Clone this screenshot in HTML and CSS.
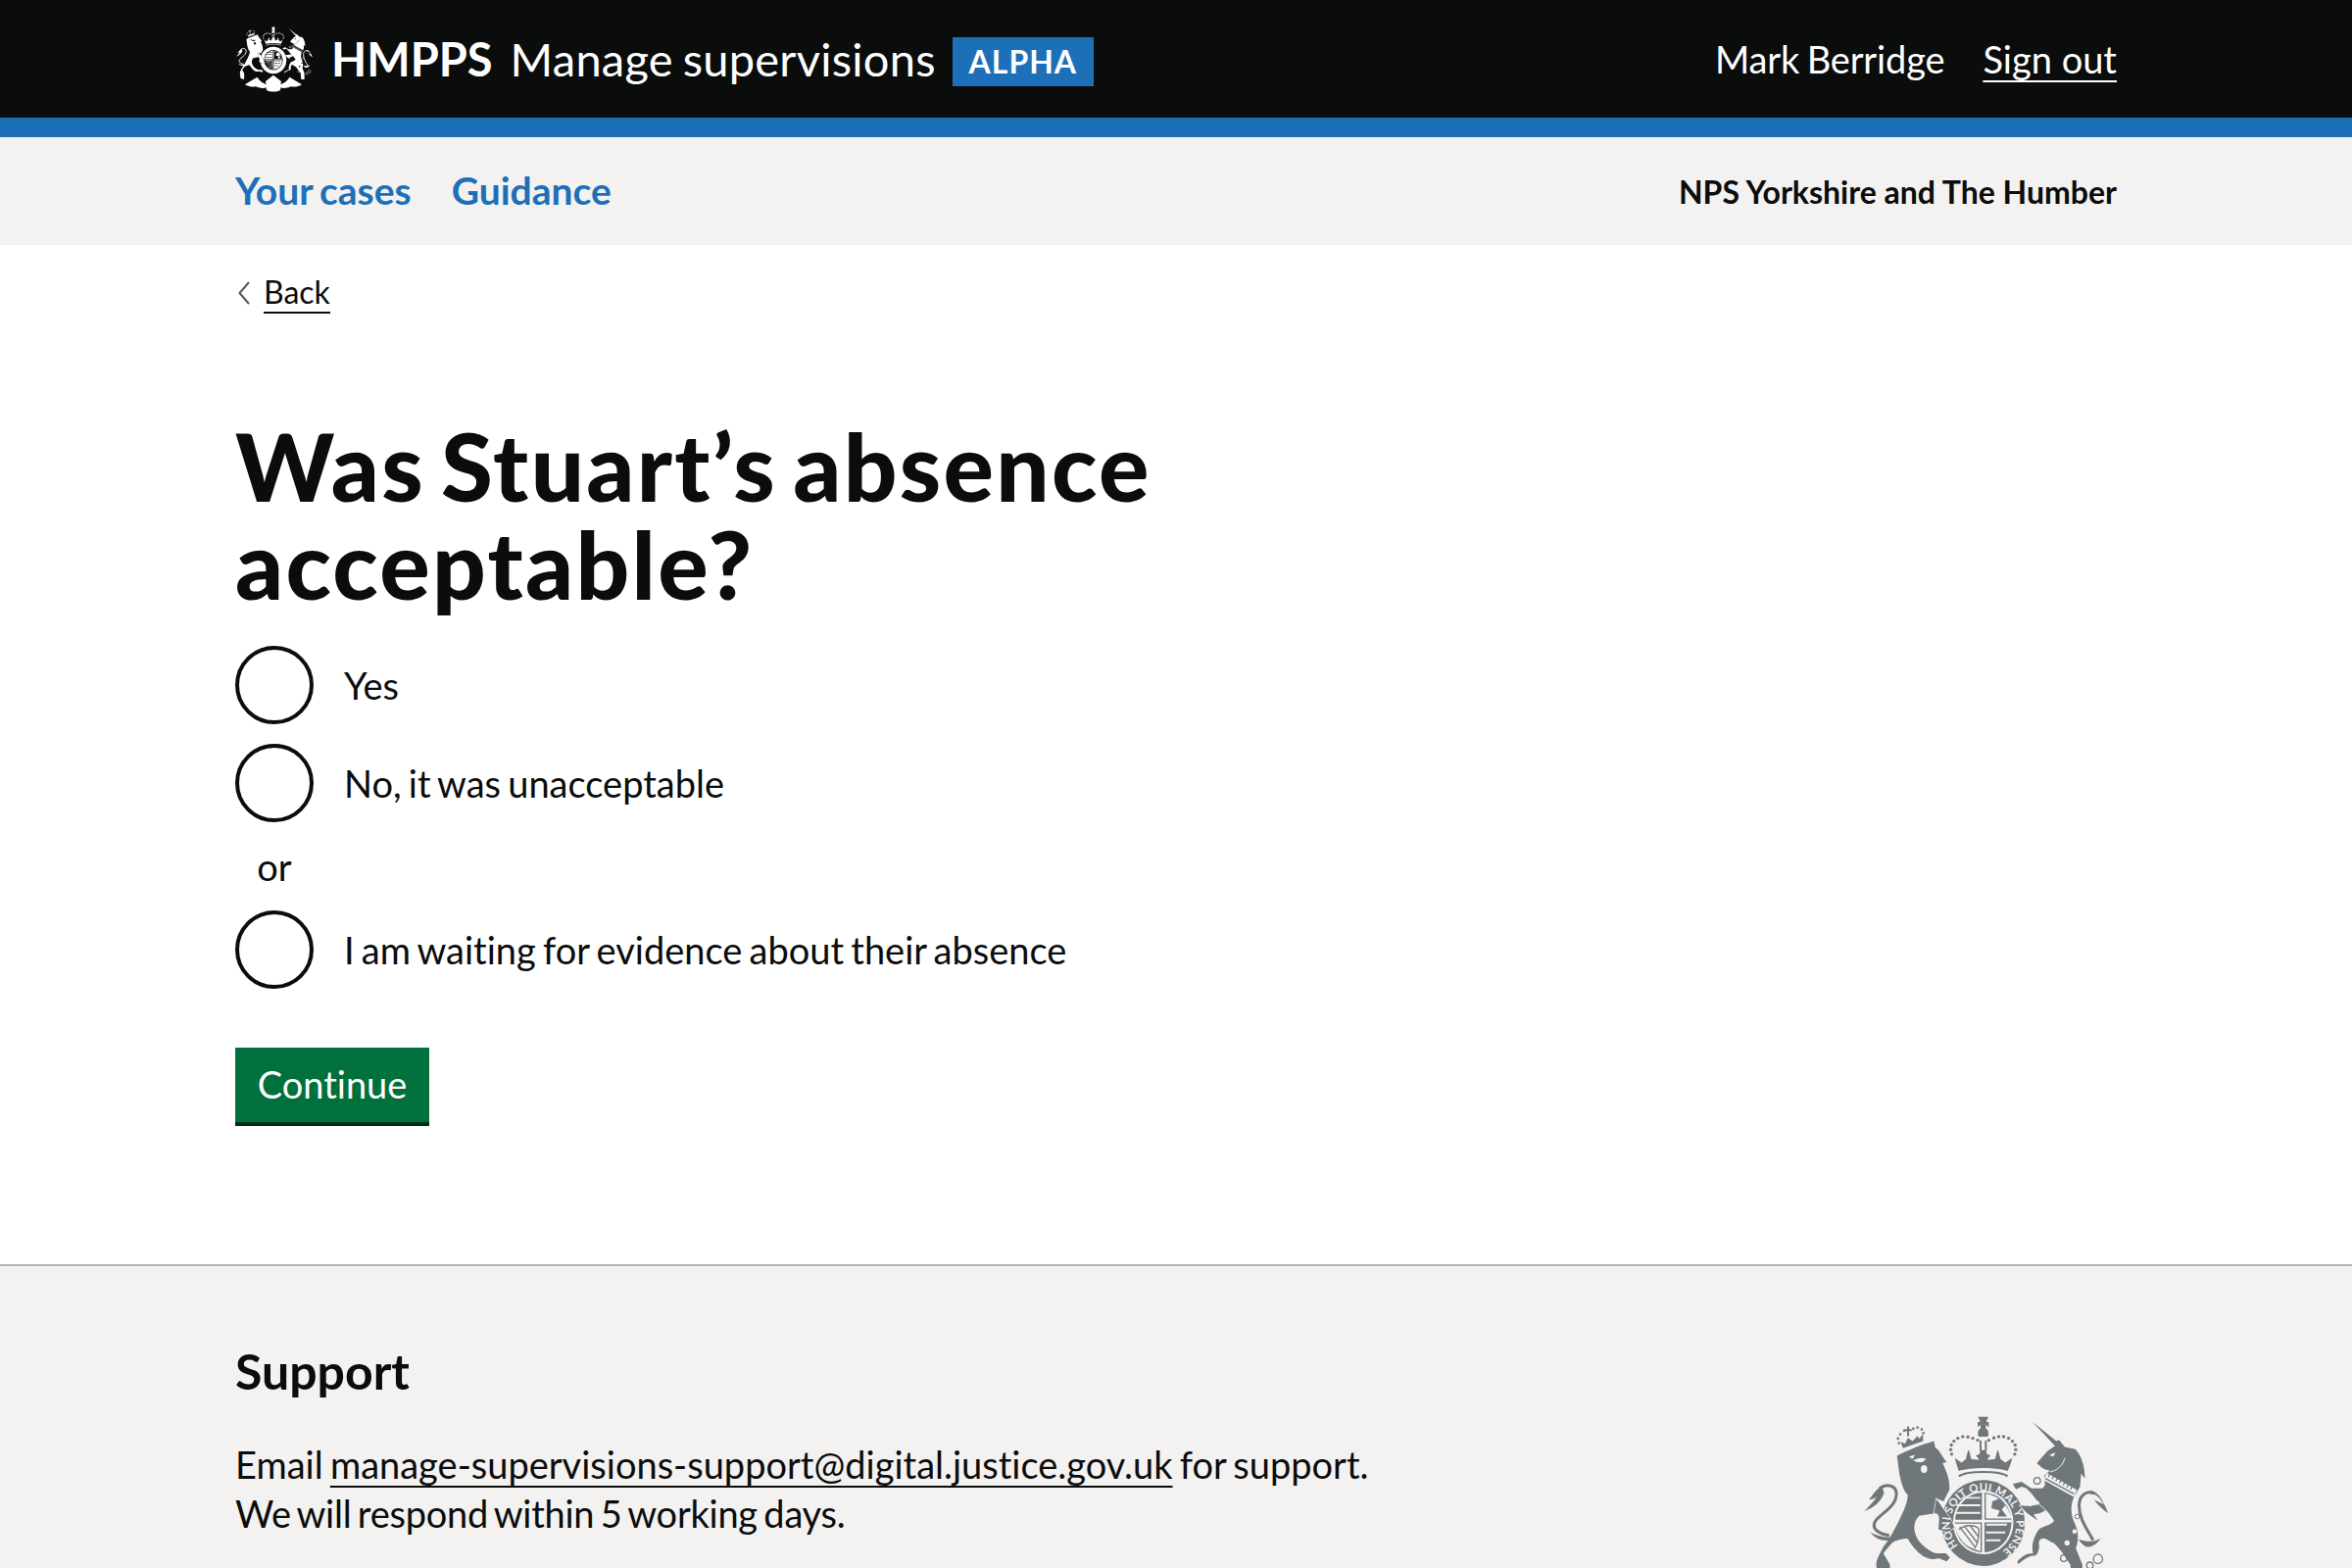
FILE: index.html
```html
<!DOCTYPE html>
<html lang="en">
<head>
<meta charset="utf-8">
<title>Was Stuart's absence acceptable?</title>
<link rel="stylesheet" href="styles.css">
</head>
<body>
<svg class="defs" width="0" height="0" aria-hidden="true">
  <symbol id="crest" viewBox="62 80 770 645">
    <!-- lion -->
    <g transform="translate(0 60)">
      <path fill="currentColor" d="M172 145 C200 130 250 110 285 100 L290 120 C305 130 305 140 325 165 L312 168 C325 195 335 220 333 250 L315 285 L290 275 L335 340 L345 365 L325 378 L300 372 C300 350 305 330 298 325 L288 322 L240 330 C225 345 222 365 228 385 C235 410 262 435 290 445 L322 445 L335 458 L325 470 L300 460 C275 470 250 455 235 440 C220 425 210 410 205 400 C190 400 165 405 155 415 L130 445 L150 480 L150 540 L115 530 L108 480 C108 465 120 445 130 425 C150 400 165 370 180 340 C195 310 205 285 205 265 C190 250 185 225 180 205 L175 170 Z"/>
      <path fill="var(--crest-bg)" d="M208 148 L228 142 L220 155 Z M222 160 C235 150 250 150 262 155 L250 165 L235 165 Z"/>
      <ellipse cx="255" cy="186" rx="10" ry="12" fill="var(--crest-bg)"/>
      <path fill="none" stroke="currentColor" stroke-width="9" d="M148 390 C115 385 95 370 103 350 C115 325 170 305 170 262 C170 235 140 230 118 245"/>
      <path fill="currentColor" d="M125 238 C105 250 95 270 85 280 C95 280 105 275 110 270 C98 290 85 300 72 315 C100 305 125 285 132 258 Z M90 380 C110 390 125 395 150 395 L150 405 C125 408 105 400 90 380 Z"/>
      <path fill="currentColor" d="M190 122 L183 102 L197 108 L205 90 L220 100 L235 84 L240 92 L252 78 L252 100 Z M203 55 H209 V63 H217 V69 H209 V85 H203 V69 H195 V63 H203 Z"/>
      <g fill="currentColor">
        <circle cx="178" cy="106" r="4"/><circle cx="175" cy="92" r="4"/><circle cx="182" cy="79" r="4"/><circle cx="194" cy="68" r="4"/><circle cx="222" cy="62" r="4"/><circle cx="235" cy="58" r="4"/><circle cx="248" cy="64" r="4"/><circle cx="253" cy="75" r="4"/>
      </g>
    </g>
    <!-- main crown -->
    <path fill="currentColor" d="M421 85 H453 L447 97 V101 H454 V117 L445 110 V121 C452 125 456 135 451 146 H423 C418 135 422 125 429 121 V110 L420 117 V101 H427 V97 Z"/>
    <path fill="currentColor" d="M350 212 C352 225 358 240 362 252 C400 240 475 240 512 252 C518 240 524 225 526 212 L505 226 L490 215 C488 205 485 195 482 186 C478 195 476 205 474 215 L450 218 C452 212 456 208 460 205 L447 198 V188 H427 V198 L414 205 C418 208 422 212 424 218 L400 215 C398 205 396 195 392 186 C388 195 386 205 384 215 L370 226 Z"/>
    <path fill="currentColor" d="M426 158 H432 V190 H426 Z M442 158 H448 V190 H442 Z"/>
    <path fill="none" stroke="currentColor" stroke-width="6" d="M362 268 C385 250 490 250 512 268"/>
    <g fill="currentColor">
      <circle cx="340" cy="200" r="5"/><circle cx="337" cy="186" r="5"/><circle cx="339" cy="172" r="5"/><circle cx="347" cy="160" r="5"/><circle cx="359" cy="151" r="5"/><circle cx="374" cy="146" r="5"/><circle cx="390" cy="147" r="5"/><circle cx="405" cy="151" r="5"/><circle cx="420" cy="157" r="5"/>
      <circle cx="454" cy="157" r="5"/><circle cx="470" cy="150" r="5"/><circle cx="485" cy="146" r="5"/><circle cx="500" cy="146" r="5"/><circle cx="515" cy="151" r="5"/><circle cx="527" cy="160" r="5"/><circle cx="535" cy="172" r="5"/><circle cx="537" cy="186" r="5"/><circle cx="534" cy="200" r="5"/>
    </g>
    <!-- garter ring and shield -->
    <ellipse cx="437" cy="412" rx="128" ry="132" fill="currentColor"/>
    <ellipse cx="437" cy="410" rx="93" ry="98" fill="var(--crest-bg)"/>
    <ellipse cx="437" cy="410" rx="87" ry="92" fill="currentColor"/>
    <path fill="var(--crest-bg)" d="M433 318 H441 V502 H433 Z M350 402 H524 V410 H350 Z"/>
    <g fill="var(--crest-bg)">
      <path d="M374 332 L428 332 V337 H368 Z M356 354 H428 V360 H356 Z M352 378 H428 V384 H352 Z"/>
      <path d="M445 322 C480 325 515 355 524 398 H445 Z M349 414 H429 V498 C385 490 355 460 349 414 Z M446 414 H510 V420 H446 Z M446 438 H505 V444 H446 Z M446 462 H490 V468 H446 Z"/>
    </g>
    <g fill="currentColor">
      <path d="M465 345 L488 336 L505 358 L494 370 L510 392 L480 392 L488 374 L462 366 Z"/>
    </g>
    <path fill="none" stroke="currentColor" stroke-width="4" d="M365 424 L412 486 M378 420 L420 474 M395 418 L424 456 M362 432 C380 416 412 416 424 430 C424 455 420 480 410 490"/>
    <!-- lion paw over the garter -->
    <path fill="currentColor" stroke="var(--crest-bg)" stroke-width="4" paint-order="stroke" d="M293 338 L338 402 L348 425 L328 440 L300 432 C300 412 304 396 298 385 L286 380 Z"/>
    <!-- unicorn -->
    <g transform="translate(420 60)">
      <path fill="currentColor" stroke="var(--crest-bg)" stroke-width="4" paint-order="stroke" d="M205 290 L165 300 L130 298 L150 320 L185 345 L172 325 L190 322 L215 310 Z"/>
      <path fill="currentColor" stroke="var(--crest-bg)" stroke-width="4" paint-order="stroke" d="M168 40 L242 100 L250 96 L268 118 L300 125 C315 140 325 165 328 190 L330 215 L318 200 L315 240 L300 265 C285 290 285 320 295 345 C310 375 312 400 302 430 L322 480 V540 H290 L285 480 L258 440 C245 425 235 410 225 410 C205 395 195 395 188 410 C190 425 190 440 178 452 C160 452 145 462 125 478 L122 470 C135 455 150 445 170 445 C165 425 170 395 190 370 C210 360 230 355 235 345 C220 320 205 305 190 295 L190 288 L180 280 L165 260 L150 245 L135 240 L118 248 L108 232 L135 225 L165 245 L200 245 L207 235 L205 205 L222 190 C200 190 190 175 182 168 L215 130 L238 115 Z"/>
      <path fill="var(--crest-bg)" d="M220 142 L240 135 L232 148 Z M212 198 L305 250 L296 272 L203 220 Z"/>
      <path fill="none" stroke="var(--crest-bg)" stroke-width="3" d="M222 195 C245 190 262 175 268 152"/>
      <path fill="none" stroke="currentColor" stroke-width="10" stroke-dasharray="4 9" d="M218 205 L298 250"/>
      <path fill="none" stroke="currentColor" stroke-width="4" d="M208 215 L296 262"/>
      <g fill="var(--crest-bg)"><circle cx="306" cy="332" r="10"/><circle cx="298" cy="378" r="7"/><circle cx="275" cy="413" r="8"/></g>
      <circle cx="306" cy="332" r="7" fill="none" stroke="currentColor" stroke-width="3"/>
      <g fill="none" stroke="currentColor">
        <circle cx="183" cy="222" r="10" stroke-width="4"/>
        <circle cx="172" cy="310" r="10" stroke-width="4"/>
        <circle cx="265" cy="460" r="10" stroke-width="4"/>
        <circle cx="345" cy="482" r="10" stroke-width="4"/>
        <circle cx="370" cy="462" r="14" stroke-width="4"/>
      </g>
      <path fill="none" stroke="currentColor" stroke-width="9" d="M355 405 C340 375 310 340 312 295 C314 262 340 250 358 262"/>
      <path fill="currentColor" d="M345 252 C372 252 388 290 402 322 C385 310 370 298 358 280 L388 295 C375 275 365 262 348 262 Z M310 402 C335 410 360 412 378 398 C370 415 350 428 332 425 C322 418 315 410 310 402 Z"/>
    </g>
    <!-- motto ribbon -->
    <path fill="currentColor" d="M158 650 L278 578 C295 610 330 635 365 650 L360 620 L437 560 L514 620 L510 650 C545 635 580 610 597 578 L716 650 C690 665 650 680 610 670 C570 688 530 690 510 680 L505 705 C470 725 405 725 370 705 L365 680 C345 690 305 688 265 670 C225 680 185 665 158 650 Z"/>
  </symbol>
</svg>

<header class="masthead">
  <div class="wrap masthead-row">
    <a class="brand" href="#">
      <svg class="brand-crest" aria-hidden="true"><use href="#crest"/></svg>
      <span class="brand-org">HMPPS</span>
      <span class="brand-service">Manage supervisions</span>
      <span class="phase-tag">ALPHA</span>
    </a>
    <div class="user">
      <span class="user-name">Mark Berridge</span>
      <a class="user-signout" href="#">Sign out</a>
    </div>
  </div>
</header>

<nav class="subnav">
  <div class="wrap subnav-row">
    <div class="subnav-links">
      <a class="subnav-link" href="#">Your cases</a>
      <a class="subnav-link" href="#">Guidance</a>
    </div>
    <span class="subnav-team">NPS Yorkshire and The Humber</span>
  </div>
</nav>

<main class="wrap main">
  <a class="back" href="#">
    <svg class="back-icon" viewBox="0 0 14 26" aria-hidden="true"><path d="M12 2 L2.5 13 L12 24"/></svg>
    <span class="back-text">Back</span>
  </a>
  <h1 class="title">Was Stuart’s absence<br>acceptable?</h1>
  <form class="form">
    <div class="radios">
      <label class="radio"><input class="radio-input" type="radio" name="a"><span class="radio-label">Yes</span></label>
      <label class="radio"><input class="radio-input" type="radio" name="a"><span class="radio-label">No, it was unacceptable</span></label>
      <div class="radio-or">or</div>
      <label class="radio"><input class="radio-input" type="radio" name="a"><span class="radio-label">I am waiting for evidence about their absence</span></label>
    </div>
    <button class="button" type="button">Continue</button>
  </form>
</main>

<footer class="footer">
  <div class="wrap footer-row">
    <div class="footer-copy">
      <h2 class="footer-heading">Support</h2>
      <p class="footer-text">Email <a class="footer-link" href="#">manage-supervisions-support@digital.justice.gov.uk</a> for support.<br><span class="footer-note">We will respond within 5 working days.</span></p>
    </div>
    <svg class="footer-crest" viewBox="62 80 770 645" aria-hidden="true">
      <use href="#crest" x="62" y="80" width="770" height="645"/>
      <path id="garter" fill="none" d="M360 482 A102 102 0 1 1 494 500"/>
      <text class="crest-motto"><textPath href="#garter" textLength="490">HONI SOIT QUI MAL Y PENSE</textPath></text>
    </svg>
  </div>
</footer>
</body>
</html>
```

FILE: styles.css
```css
* { box-sizing: border-box; }
html, body { margin: 0; height: 1600px; overflow: hidden; }
body {
  font-family: Lato, "Noto Sans", sans-serif;
  font-variant-ligatures: none;
  word-spacing: -2.5px;
  color: #0b0c0c;
  background: #fff;
  font-size: 38px;
  line-height: 50px;
}
a { color: inherit; }
.defs { position: absolute; }
.wrap { width: 1920px; margin: 0 auto; }

.masthead {
  height: 140px;
  background: #0b0c0c;
  border-bottom: 20px solid #1d70b8;
  color: #fff;
}
.masthead-row { height: 120px; display: flex; align-items: center; justify-content: space-between; }
.brand { display: flex; align-items: center; text-decoration: none; color: #fff; }
.brand-crest { width: 80px; height: 67px; margin-right: 18px; --crest-bg: #0b0c0c; color: #fff; }
.brand-org { font-weight: 700; font-size: 47px; margin-right: 18px; }
.brand-service { font-size: 47px; letter-spacing: 0.25px; margin-right: 17px; }
.phase-tag {
  background: #1d70b8;
  color: #fff;
  font-weight: 700;
  font-size: 32px;
  letter-spacing: 1px;
  height: 50px;
  line-height: 50px;
  width: 144px;
  margin-top: 6px;
  text-align: center;
}
.user { display: flex; gap: 39px; font-size: 38px; word-spacing: 0; }
.user-name { word-spacing: -2px; letter-spacing: -0.15px; }
.user-signout { text-underline-offset: 7px; text-decoration-thickness: 2px; }

.subnav { background: #f3f2f1; height: 110px; }
.subnav-row { height: 110px; display: flex; align-items: center; justify-content: space-between; }
.subnav-links { display: flex; gap: 41px; margin-top: -2px; }
.subnav-link { color: #1d70b8; font-weight: 700; font-size: 39px; text-decoration: none; }
.subnav-team { font-weight: 700; font-size: 32px; word-spacing: 0; margin-top: 1px; }

.main { padding-top: 22px; height: 1040px; }
.back { display: inline-flex; align-items: center; font-size: 32px; line-height: 48px; height: 48px; text-decoration: none; }
.back-icon { width: 14px; height: 26px; margin: 0 13px 0 2px; fill: none; stroke: #505a5f; stroke-width: 2; }
.back-text { border-bottom: 2px solid #0b0c0c; line-height: 40px; height: 42px; display: block; }
.title { margin: 102px 0 0; font-size: 96px; line-height: 100px; font-weight: 900; letter-spacing: 2.3px; word-spacing: -9px; }

.form { margin-top: 34px; }
.radios { display: flex; flex-direction: column; gap: 20px; }
.radio { display: flex; align-items: center; height: 80px; }
.radio-input {
  appearance: none;
  width: 80px; height: 80px;
  margin: 0 31px 0 0;
  border: 4px solid #0b0c0c;
  border-radius: 50%;
  background: #fff;
  flex: none;
}
.radio-label { font-size: 38px; }
.radio-or { width: 80px; text-align: center; height: 50px; margin: 0; font-size: 38px; }
.button {
  display: block;
  margin-top: 60px;
  width: 198px;
  height: 80px;
  padding: 0 0 2px;
  border: 0;
  border-bottom: 4px solid #002d18;
  background: #00703c;
  color: #fff;
  font: inherit;
  font-size: 38px;
}

.footer { border-top: 2px solid #b1b4b6; background: #f3f2f1; height: 400px; padding-top: 77px; }
.footer-row { display: flex; justify-content: space-between; }
.footer-heading { margin: 0; font-size: 50px; line-height: 60px; font-weight: 700; }
.footer-text { margin: 40px 0 0; font-size: 38px; line-height: 50px; }
.footer-note { word-spacing: -3px; letter-spacing: -0.25px; }
.footer-link { text-underline-offset: 7px; text-decoration-thickness: 2px; }
.footer-crest { width: 256px; height: 214px; margin: 75px 5px 0 0; --crest-bg: #f3f2f1; color: #6f777b; flex: none; }
.crest-motto { font-family: Lato, sans-serif; font-weight: 700; font-size: 34px; fill: #f3f2f1; word-spacing: 0; }
```
